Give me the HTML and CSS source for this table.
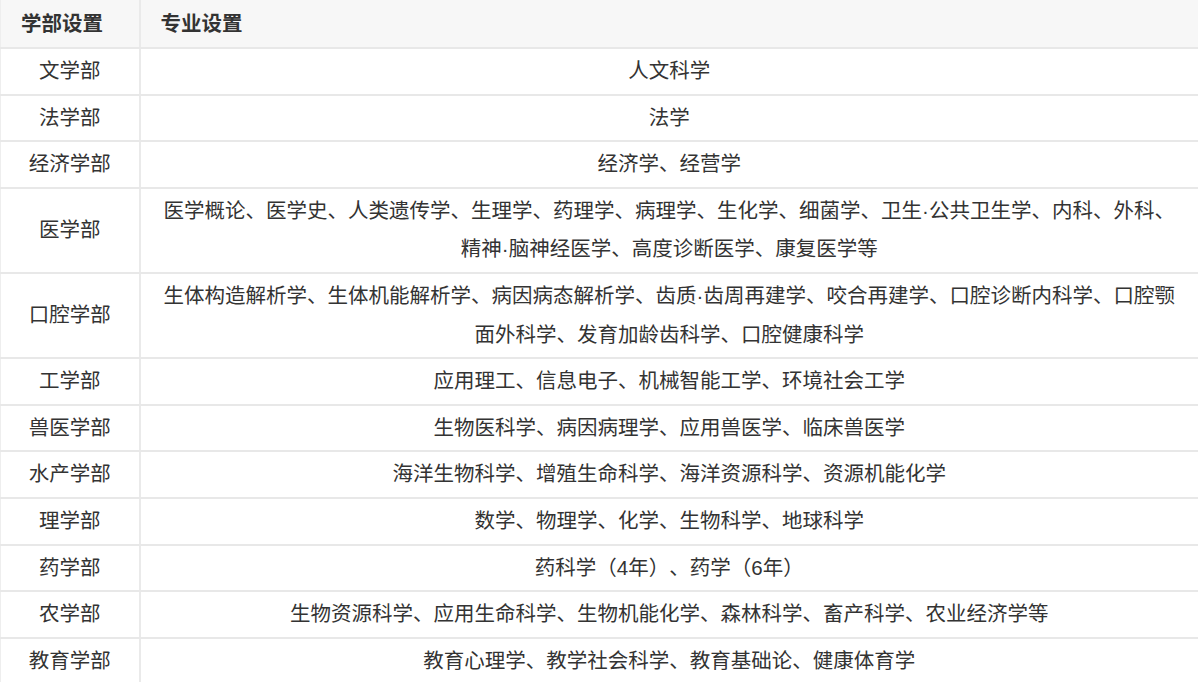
FILE: index.html
```html
<!DOCTYPE html>
<html lang="zh-CN">
<head>
<meta charset="utf-8">
<title>学部设置</title>
<link rel="stylesheet" href="styles.css">
</head>
<body>
<table class="faculty-table">
  <thead>
    <tr>
      <th class="col-dept">学部设置</th>
      <th class="col-major">专业设置</th>
    </tr>
  </thead>
  <tbody>
    <tr><td class="col-dept">文学部</td><td class="col-major">人文科学</td></tr>
    <tr><td class="col-dept">法学部</td><td class="col-major">法学</td></tr>
    <tr><td class="col-dept">经济学部</td><td class="col-major">经济学、经营学</td></tr>
    <tr><td class="col-dept">医学部</td><td class="col-major">医学概论、医学史、人类遗传学、生理学、药理学、病理学、生化学、细菌学、卫生·公共卫生学、内科、外科、精神·脑神经医学、高度诊断医学、康复医学等</td></tr>
    <tr><td class="col-dept">口腔学部</td><td class="col-major">生体构造解析学、生体机能解析学、病因病态解析学、齿质·齿周再建学、咬合再建学、口腔诊断内科学、口腔颚面外科学、发育加龄齿科学、口腔健康科学</td></tr>
    <tr><td class="col-dept">工学部</td><td class="col-major">应用理工、信息电子、机械智能工学、环境社会工学</td></tr>
    <tr><td class="col-dept">兽医学部</td><td class="col-major">生物医科学、病因病理学、应用兽医学、临床兽医学</td></tr>
    <tr><td class="col-dept">水产学部</td><td class="col-major">海洋生物科学、增殖生命科学、海洋资源科学、资源机能化学</td></tr>
    <tr><td class="col-dept">理学部</td><td class="col-major">数学、物理学、化学、生物科学、地球科学</td></tr>
    <tr><td class="col-dept">药学部</td><td class="col-major">药科学（4年）、药学（6年）</td></tr>
    <tr><td class="col-dept">农学部</td><td class="col-major">生物资源科学、应用生命科学、生物机能化学、森林科学、畜产科学、农业经济学等</td></tr>
    <tr><td class="col-dept">教育学部</td><td class="col-major">教育心理学、教学社会科学、教育基础论、健康体育学</td></tr>
  </tbody>
</table>
</body>
</html>
```

FILE: styles.css
```css
html, body {
  margin: 0;
  padding: 0;
  background: #ffffff;
}

body {
  font-family: "Liberation Sans", "Noto Sans CJK SC", sans-serif;
  font-size: 20.5px;
  color: #333333;
  text-spacing-trim: space-all;
}

.faculty-table {
  width: 1198px;
  border-collapse: collapse;
  table-layout: fixed;
  border-left: 1px solid #eeeeee;
}

.faculty-table th,
.faculty-table td {
  border-bottom: 2px solid #e8e8e8;
  padding: 3px 20px;
  line-height: 38.6px;
  vertical-align: middle;
}

.faculty-table thead th {
  background: #f7f7f7;
  font-weight: 700;
  text-align: left;
  padding-top: 5px;
  padding-bottom: 4px;
  line-height: 38px;
}

.faculty-table .col-dept {
  width: 139px;
  box-sizing: border-box;
  border-right: 2px solid #eaeaea;
  padding-left: 0;
  padding-right: 0;
  text-align: center;
}

.faculty-table thead .col-dept {
  padding-left: 20px;
  text-align: left;
}

.faculty-table td.col-major {
  text-align: center;
}
```
